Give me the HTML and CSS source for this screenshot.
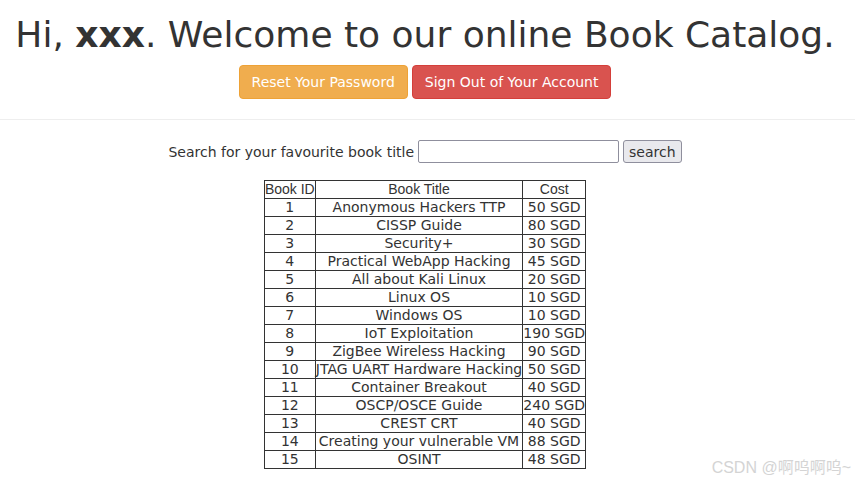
FILE: index.html
```html
<!DOCTYPE html>
<html>
<head>
<meta charset="utf-8">
<link rel="stylesheet" href="styles.css">
</head>
<body>
<div class="container">
  <div class="page-header">
    <h1>Hi, <b>xxx</b>. Welcome to our online Book Catalog.</h1>
    <div class="actions">
      <a class="btn btn-warning">Reset Your Password</a>
      <a class="btn btn-danger">Sign Out of Your Account</a>
    </div>
  </div>
</div>
<hr class="divider">
<div class="container">
  <form class="search">
    <label for="q">Search for your favourite book title</label>
    <input id="q" type="text" class="search-input">
    <button type="button" class="search-btn">search</button>
  </form>
  <table class="books">
    <thead>
      <tr><th class="c-id">Book ID</th><th class="c-title">Book Title</th><th class="c-cost">Cost</th></tr>
    </thead>
    <tbody>
      <tr><td>1</td><td>Anonymous Hackers TTP</td><td>50 SGD</td></tr>
      <tr><td>2</td><td>CISSP Guide</td><td>80 SGD</td></tr>
      <tr><td>3</td><td>Security+</td><td>30 SGD</td></tr>
      <tr><td>4</td><td>Practical WebApp Hacking</td><td>45 SGD</td></tr>
      <tr><td>5</td><td>All about Kali Linux</td><td>20 SGD</td></tr>
      <tr><td>6</td><td>Linux OS</td><td>10 SGD</td></tr>
      <tr><td>7</td><td>Windows OS</td><td>10 SGD</td></tr>
      <tr><td>8</td><td>IoT Exploitation</td><td>190 SGD</td></tr>
      <tr><td>9</td><td>ZigBee Wireless Hacking</td><td>90 SGD</td></tr>
      <tr><td>10</td><td>JTAG UART Hardware Hacking</td><td>50 SGD</td></tr>
      <tr><td>11</td><td>Container Breakout</td><td>40 SGD</td></tr>
      <tr><td>12</td><td>OSCP/OSCE Guide</td><td>240 SGD</td></tr>
      <tr><td>13</td><td>CREST CRT</td><td>40 SGD</td></tr>
      <tr><td>14</td><td>Creating your vulnerable VM</td><td>88 SGD</td></tr>
      <tr><td>15</td><td>OSINT</td><td>48 SGD</td></tr>
    </tbody>
  </table>
</div>
<div class="watermark">CSDN @啊呜啊呜~</div>
</body>
</html>
```

FILE: styles.css
```css
html, body {
  margin: 0;
  padding: 0;
}
body {
  font-family: "DejaVu Sans", sans-serif;
  font-size: 14px;
  line-height: 20px;
  color: #333;
  background: #fff;
  position: relative;
  min-height: 484px;
}
.container {
  width: 850px;
}
.page-header {
  text-align: center;
}
h1 {
  margin: 13px 0 8px;
  font-size: 36px;
  line-height: 44px;
  font-weight: 500;
  color: #333;
  white-space: nowrap;
}
h1 b {
  font-weight: bold;
}
.actions {
  display: flex;
  justify-content: center;
  gap: 4px;
}
.btn {
  display: inline-block;
  padding: 6px 12px;
  font-size: 14px;
  line-height: 20px;
  border: 1px solid transparent;
  border-radius: 4px;
  color: #fff;
  cursor: pointer;
}
.btn-warning {
  background: #f0ad4e;
  border-color: #eea236;
}
.btn-danger {
  background: #d9534f;
  border-color: #d43f3a;
}
.divider {
  margin: 20px 0 20px;
  border: 0;
  border-top: 1px solid #eee;
}
.search {
  display: flex;
  justify-content: center;
  align-items: center;
  gap: 4px;
  margin: 0;
}
.search label {
  color: #333;
}
.search-input {
  width: 197px;
  height: 19px;
  padding: 1px 1px;
  border: 1px solid #8f8f9d;
  border-radius: 2px;
  font-family: "DejaVu Sans", sans-serif;
  font-size: 14px;
  margin: 0;
}
.search-btn {
  height: 23px;
  padding: 0 5px;
  font-family: "DejaVu Sans", sans-serif;
  font-size: 14px;
  color: #333;
  background: #e9e9ed;
  border: 1px solid #8f8f9d;
  border-radius: 3px;
  margin: 0;
}
.books {
  margin: 17px auto 0;
  border-collapse: collapse;
}
.books th, .books td {
  border: 1px solid #333;
  padding: 0;
  text-align: center;
  height: 17px;
  line-height: 17px;
  white-space: nowrap;
}
.books th {
  font-family: "Liberation Sans", Arial, sans-serif;
  font-weight: normal;
  font-size: 14px;
}
.c-id { width: 50px; }
.c-title { width: 206px; }
.c-cost { width: 62px; }
.watermark {
  position: absolute;
  right: 4px;
  bottom: 6px;
  font-family: "Liberation Sans", "Noto Sans CJK SC", sans-serif;
  font-size: 16px;
  color: #d4d4d4;
}
```
